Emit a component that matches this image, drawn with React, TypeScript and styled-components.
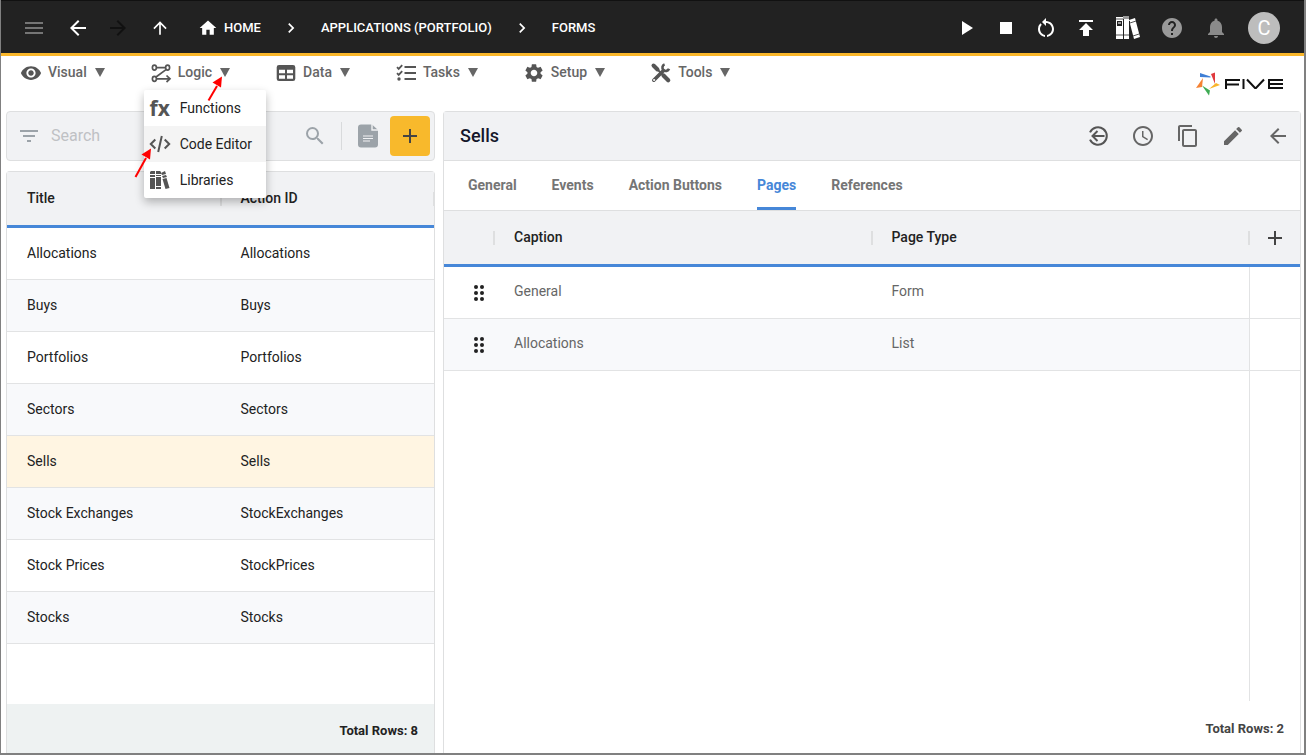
import React from "react";
import styled, { createGlobalStyle, css } from "styled-components";
import {
  MdMenu, MdArrowBack, MdArrowForward, MdArrowUpward, MdHome, MdChevronRight,
  MdPlayArrow, MdStop, MdRestartAlt, MdPublish, MdHelp, MdNotifications,
  MdVisibility, MdSettings, MdFilterList, MdSearch, MdAdd, MdAccessTime,
  MdContentCopy, MdEdit,
} from "react-icons/md";

const GlobalStyle = createGlobalStyle`
  * { box-sizing: border-box; }
  body {
    margin: 0;
    background: #fff;
    color: #222;
    font-family: Roboto, "Liberation Sans", sans-serif;
    font-size: 14px;
    line-height: 20px;
  }
  button, input { font: inherit; color: inherit; }
  button { border: 0; padding: 0; background: none; cursor: pointer; }
  a { color: inherit; text-decoration: none; }
  svg { display: block; flex: none; }
  table { width: 100%; border-collapse: separate; border-spacing: 0; table-layout: fixed; }
`;

const Frame = styled.div`
  display: flex;
  flex-direction: column;
  min-height: 100vh;
  border: solid #808080;
  border-width: 0 2px 2px 1px;
`;

const TopBar = styled.header`
  display: flex;
  align-items: center;
  justify-content: space-between;
  height: 56px;
  padding: 2px 24px 0 21px;
  background: #222;
  border-top: 1px solid #111;
  border-bottom: 3px solid #fab72a;
  color: #fff;
`;

const NavGroup = styled.nav`
  display: flex;
  align-items: center;
`;

const NavButton = styled.button<{ $gap: number; $tone?: string }>`
  display: flex;
  margin-right: ${(p) => p.$gap}px;
  color: ${(p) => p.$tone || "#fff"};
`;

const Crumb = styled.a`
  display: flex;
  align-items: center;
  gap: 6px;
  font-size: 13px;
  font-weight: 500;
`;

const CrumbSeparator = styled.span`
  display: flex;
  margin: 0 20px;
`;

const Actions = styled.div`
  display: flex;
  align-items: center;
  gap: 16px;
`;

const ActionButton = styled.button<{ $tone?: string }>`
  display: flex;
  align-items: center;
  justify-content: center;
  width: 24px;
  height: 28px;
  color: ${(p) => p.$tone || "#fff"};
`;

const WideAction = styled(ActionButton)`
  width: 28px;
`;

const Avatar = styled.button`
  width: 32px;
  height: 32px;
  margin-left: 2px;
  border-radius: 50%;
  background: #bdbdbd;
  color: #fff;
  font-size: 20px;
`;

const MenuBar = styled.div`
  display: flex;
  justify-content: space-between;
  height: 55px;
  padding: 3px 20px 0 19px;
`;

const Menus = styled.nav`
  display: flex;
  align-items: flex-start;
  gap: 45px;
`;

const MenuHolder = styled.div`
  position: relative;
`;

const MenuButton = styled.button`
  display: flex;
  align-items: center;
  gap: 6px;
  height: 26px;
  color: #666;
  font-weight: 500;
  svg {
    margin-top: 2px;
    color: #555;
  }
`;

const Caret = styled.span`
  margin-left: 2px;
  border: solid transparent;
  border-width: 9px 5px 0;
  border-top-color: #666;
`;

const Dropdown = styled.div`
  position: absolute;
  z-index: 2;
  top: 31px;
  left: -6px;
  width: 122px;
  background: #fff;
  border-radius: 2px;
  box-shadow: 0 4px 10px rgba(0, 0, 0, 0.28);
`;

const DropdownItem = styled.button<{ $active?: boolean }>`
  display: flex;
  align-items: center;
  gap: 8px;
  width: 100%;
  height: 36px;
  padding-left: 4px;
  background: ${(p) => (p.$active ? "#f4f4f4" : "transparent")};
  svg { color: #555; }
`;

const FxMark = styled.span`
  width: 24px;
  color: #555;
  font-family: "Open Sans", "Noto Sans", sans-serif;
  font-size: 21px;
  font-weight: 700;
  line-height: 24px;
`;

const Pointer = styled.svg<{ $x: number; $y: number }>`
  position: absolute;
  z-index: 3;
  left: ${(p) => p.$x}px;
  top: ${(p) => p.$y}px;
  pointer-events: none;
`;

const Logo = styled.a`
  display: flex;
  padding-top: 13px;
`;

const Workspace = styled.main`
  display: grid;
  grid-template-columns: 1fr 2fr;
  gap: 8px;
  flex: 1;
  padding: 0 3px 0 5px;
`;

const ListPane = styled.section`
  display: flex;
  flex-direction: column;
  gap: 10px;
`;

const SearchBar = styled.div`
  display: flex;
  align-items: center;
  height: 50px;
  padding: 0 4px 0 10px;
  background: #f1f2f4;
  border: 1px solid #dedfe0;
  border-radius: 4px;
  color: #9ca3a9;
`;

const SearchInput = styled.input`
  flex: 1;
  min-width: 0;
  margin-left: 10px;
  padding: 0;
  border: 0;
  outline: 0;
  background: transparent;
  font-size: 16px;
  &::placeholder { color: #bfc1c4; opacity: 1; }
`;

const ReportButton = styled.button`
  display: flex;
  align-items: center;
  height: 28px;
  margin: 0 12px 0 14px;
  padding-left: 16px;
  border-left: 1px solid #d8dadc;
`;

const AddButton = styled.button`
  display: flex;
  align-items: center;
  justify-content: center;
  width: 40px;
  height: 40px;
  border-radius: 4px;
  background: #f8b92c;
  color: #444;
`;

const Panel = styled.div`
  display: flex;
  flex-direction: column;
  flex: 1;
  background: #fff;
  border: 1px solid #dedfe0;
  border-bottom: 0;
  border-radius: 4px 4px 0 0;
`;

const HeadCell = styled.th<{ $last?: boolean }>`
  position: relative;
  height: 56px;
  padding: 0 0 2px 20px;
  background: #f1f2f4;
  border-bottom: 3px solid #4687d8;
  text-align: left;
  font-weight: 500;
  ${(p) =>
    !p.$last &&
    css`
      &::after {
        content: "";
        position: absolute;
        z-index: 1;
        right: -1px;
        top: 20px;
        width: 2px;
        height: 14px;
        background: #dedfe0;
      }
    `}
`;

const Cell = styled.td`
  height: 52px;
  padding: 0 0 2px 20px;
  border-bottom: 1px solid #e2e3e4;
`;

const ListRow = styled.tr<{ $selected?: boolean }>`
  cursor: pointer;
  &:nth-child(even) { background: #f8f9fb; }
  ${(p) => p.$selected && css`background: #fff5e2;`}
`;

const ListFooter = styled.footer`
  display: flex;
  align-items: center;
  justify-content: flex-end;
  height: 49px;
  margin-top: auto;
  padding: 4px 16px 0 0;
  background: #eef2f2;
  font-size: 13px;
  font-weight: 700;
`;

const DetailFooter = styled(ListFooter)`
  height: 52px;
  margin-top: 0;
  padding-top: 3px;
  background: #fff;
  color: #444;
`;

const DetailHeader = styled.div`
  display: flex;
  align-items: center;
  justify-content: space-between;
  height: 49px;
  padding: 0 10px 0 16px;
  background: #f1f2f4;
  border-bottom: 1px solid #dedfe0;
`;

const Title = styled.h1`
  margin: 0;
  color: #15172b;
  font-size: 18px;
  font-weight: 500;
`;

const DetailActions = styled.div`
  display: flex;
  gap: 21px;
`;

const DetailButton = styled.button`
  display: flex;
  color: #666;
`;

const Tabs = styled.div`
  display: flex;
  gap: 35px;
  height: 50px;
  padding: 0 24px;
  border-bottom: 1px solid #dedfe0;
`;

const Tab = styled.button<{ $active?: boolean }>`
  height: 49px;
  padding-bottom: 2px;
  border: solid transparent;
  border-width: 3px 0;
  border-bottom-color: ${(p) => (p.$active ? "#4687d8" : "transparent")};
  color: ${(p) => (p.$active ? "#4687d8" : "#757575")};
  font-weight: 700;
`;

const DetailCell = styled(Cell)`
  padding-bottom: 3px;
  color: #666;
  tr:nth-child(even) > & { background: #f8f9fb; }
`;

const HandleCell = styled(DetailCell)`
  padding: 0 0 0 30px;
`;

const EdgeCell = styled(DetailCell)`
  border-left: 1px solid #e2e3e4;
  tr:nth-child(even) > & { background: #fff; }
`;

const HeadButtonCell = styled(HeadCell)`
  padding: 0 0 0 14px;
`;

const FixedColumn = styled.col<{ $width: number }>`
  width: ${(p) => p.$width}px;
`;

const Filler = styled.div`
  flex: 1;
  padding-right: 50px;
`;

const FillerLine = styled.div`
  height: 100%;
  border-right: 1px solid #e2e3e4;
`;

const LogicIcon = () => (
  <svg width="22" height="22" viewBox="0 0 22 22" fill="none" stroke="currentColor" strokeWidth="1.7">
    <ellipse cx="4.400" cy="5.600" rx="2" ry="2.500" />
    <ellipse cx="17.600" cy="5.600" rx="2" ry="2.500" />
    <ellipse cx="4.400" cy="16.800" rx="2" ry="2.500" />
    <path d="M6.500 5.600h9M16 7.600 6 15M6.500 16.800H19.500M16.500 13.500l3.500 3.300-3.500 3.200" />
  </svg>
);

const DataIcon = () => (
  <svg width="22" height="22" viewBox="0 0 22 22" fill="currentColor" fillRule="evenodd">
    <path d="M4 3h14a2.300 2.300 0 0 1 2.300 2.300v11.400A2.300 2.300 0 0 1 18 19H4a2.300 2.300 0 0 1-2.300-2.300V5.300A2.300 2.300 0 0 1 4 3zm0 4.800v3.400h6V7.800zm8 0v3.400h6V7.800zM4 13.200v3.600h6v-3.600zm8 0v3.600h6v-3.600z" />
  </svg>
);

const TasksIcon = () => (
  <svg width="22" height="22" viewBox="0 0 22 22" fill="none" stroke="currentColor" strokeWidth="1.800">
    <path d="M9.500 5H21M9.500 11H21M9.500 17H21" strokeWidth="2" />
    <path d="M2 5.200l1.700 1.700L7.200 3.200M2 11.200l1.700 1.700L7.200 9.200" />
    <circle cx="4" cy="17" r="1.700" fill="currentColor" stroke="none" />
  </svg>
);

const ToolsIcon = () => (
  <svg width="22" height="22" viewBox="-1 -1 22 22" fill="none" stroke="currentColor" strokeLinecap="round">
    <path d="M2.500 2.500l4 4" strokeWidth="4" />
    <path d="M6 6l6 6" strokeWidth="1.800" />
    <path d="M12.500 12.500l4.700 4.700" strokeWidth="4.200" />
    <path d="M2.800 17.200l9.500-9.500" strokeWidth="3.600" />
    <path d="M18 5.800a3.400 3.400 0 1 1-4.400-4.400" strokeWidth="2.600" strokeLinecap="butt" />
    <circle cx="3" cy="17" r=".6" stroke="#fff" strokeWidth="1" />
  </svg>
);

const CodeIcon = () => (
  <svg width="24" height="24" viewBox="0 0 24 24" fill="none" stroke="currentColor" strokeWidth="2">
    <path d="M7.300 7.500 2.800 12l4.500 4.500M16.700 7.500l4.500 4.500-4.500 4.500M13.800 4l-3.600 16" />
  </svg>
);

const LibrariesIcon = () => (
  <svg width="24" height="24" viewBox="0 0 24 24" fill="currentColor">
    <path d="M2 4l1-1h4v3H2zM2 7h5v2H2zM2 10h5v11H2zM8 3h4l1 1v2H8zM8 7h5v1H8zM8 9h5v9H8zM8 19h5v2H8zM13 5l4-2 1 3-4 1zM14 8l4-1 1 2-4 1zM14.500 11l4-1 3 10-4 1z" />
  </svg>
);

const BooksIcon = () => (
  <svg width="26" height="26" viewBox="0 0 26 26">
    <path d="M1 2h7v22H1zM9 1h5v23H9zM14 5l6-2 5 19-6 2z" fill="#fff" />
    <path d="M2 6h5v5H2z" fill="#222" />
    <path d="M3 7h3v2H3zM8 1h6v3H8z" fill="#999" />
    <path d="M1 20h7M9 20h5M15 8l6-2M18 21l6-2M1 4h7" stroke="#555" fill="none" />
    <path d="M8.500 4v20M14.500 6v18" stroke="#222" />
  </svg>
);

const ReportIcon = () => (
  <svg width="20" height="24" viewBox="0 0 20 24">
    <path d="M3 .5h11L20 6v14.500a3 3 0 0 1-3 3H3a3 3 0 0 1-3-3v-17a3 3 0 0 1 3-3z" fill="currentColor" />
    <path d="M14 0v6h6" fill="none" stroke="#f1f2f4" strokeWidth="1.400" />
    <path d="M5 12h10M5 14.500h10M5 17h7" stroke="#f1f2f4" strokeWidth="1.200" />
  </svg>
);

const RevertIcon = () => (
  <svg width="24" height="24" viewBox="0 0 24 24" fill="none" stroke="#555" strokeWidth="2">
    <path d="M4 8.300A8.800 8.800 0 1 1 4 15.700" />
    <path d="M18.500 12H6.500M11.500 7l-5 5 5 5" />
  </svg>
);

const DragIcon = () => (
  <svg width="10" height="16" viewBox="0 0 10 16" fill="#222">
    {[2, 8, 14].map((y) => (
      <React.Fragment key={y}>
        <circle cx="2" cy={y} r="2" />
        <circle cx="8" cy={y} r="2" />
      </React.Fragment>
    ))}
  </svg>
);

const FiveLogo = () => (
  <svg width="88" height="24" viewBox="0 0 88 24" role="img" aria-label="FIVE">
    <path d="M4 1l10.500 3.500V5.500L4 5z" fill="#3f7fd5" />
    <path d="M19 .5V12l-4-10z" fill="#e03a3e" />
    <path d="M24 13l-11 4 7-6z" fill="#f9b52b" />
    <path d="M13 23.500l-7-10 8 5z" fill="#3eab54" />
    <path d="M0 16L7 6l-1 9z" fill="#f58233" />
    <g fill="none" stroke="#111" strokeWidth="2">
      <path d="M30 17V8h14M31 12.500h12M47.500 7v10M51 7.500l8 8.500h1l8-8.500M87 8H73v8h14M73 12h14" />
    </g>
  </svg>
);

const ArrowMark = ({ x, y, tail }: { x: number; y: number; tail: string }) => (
  <Pointer $x={x} $y={y} width="18" height="30" viewBox="0 0 18 30">
    <path d={`M${tail}L12 10`} stroke="#f00" strokeWidth="2" />
    <path d="M17 0.500L16 11.500 7.500 6.500z" fill="#f00" />
  </Pointer>
);

const menus = [
  { label: "Visual", icon: <MdVisibility size={22} /> },
  { label: "Logic", icon: <LogicIcon /> },
  { label: "Data", icon: <DataIcon /> },
  { label: "Tasks", icon: <TasksIcon /> },
  { label: "Setup", icon: <MdSettings size={22} /> },
  { label: "Tools", icon: <ToolsIcon /> },
];

const forms = [
  ["Allocations", "Allocations"],
  ["Buys", "Buys"],
  ["Portfolios", "Portfolios"],
  ["Sectors", "Sectors"],
  ["Sells", "Sells"],
  ["Stock Exchanges", "StockExchanges"],
  ["Stock Prices", "StockPrices"],
  ["Stocks", "Stocks"],
];

const pages = [
  ["General", "Form"],
  ["Allocations", "List"],
];

const tabs = ["General", "Events", "Action Buttons", "Pages", "References"];

export default function App() {
  return (
    <>
      <GlobalStyle />
      <Frame>
        <TopBar>
          <NavGroup aria-label="Breadcrumb">
            <NavButton $gap={20} $tone="#757575" aria-label="Menu"><MdMenu size={24} /></NavButton>
            <NavButton $gap={16} aria-label="Back"><MdArrowBack size={24} /></NavButton>
            <NavButton $gap={20} $tone="#111" aria-label="Forward"><MdArrowForward size={24} /></NavButton>
            <NavButton $gap={28} aria-label="Up"><MdArrowUpward size={20} /></NavButton>
            <Crumb href="#home"><MdHome size={20} />HOME</Crumb>
            <CrumbSeparator><MdChevronRight size={20} /></CrumbSeparator>
            <Crumb href="#applications">APPLICATIONS (PORTFOLIO)</Crumb>
            <CrumbSeparator><MdChevronRight size={20} /></CrumbSeparator>
            <Crumb href="#forms">FORMS</Crumb>
          </NavGroup>
          <Actions>
            <ActionButton aria-label="Run"><MdPlayArrow size={24} /></ActionButton>
            <ActionButton aria-label="Stop"><MdStop size={24} /></ActionButton>
            <ActionButton aria-label="Restart"><MdRestartAlt size={24} /></ActionButton>
            <ActionButton aria-label="Deploy"><MdPublish size={24} /></ActionButton>
            <WideAction aria-label="Documentation"><BooksIcon /></WideAction>
            <WideAction $tone="#999" aria-label="Help"><MdHelp size={24} /></WideAction>
            <WideAction $tone="#8a8a8a" aria-label="Notifications"><MdNotifications size={24} /></WideAction>
            <Avatar>C</Avatar>
          </Actions>
        </TopBar>

        <MenuBar>
          <Menus aria-label="Main">
            {menus.map((menu) => (
              <MenuHolder key={menu.label}>
                <MenuButton>
                  {menu.icon}
                  {menu.label}
                  <Caret />
                </MenuButton>
                {menu.label === "Logic" && (
                  <>
                    <Dropdown>
                      <DropdownItem><FxMark aria-hidden="true">fx</FxMark>Functions</DropdownItem>
                      <DropdownItem $active><CodeIcon />Code Editor</DropdownItem>
                      <DropdownItem><LibrariesIcon />Libraries</DropdownItem>
                    </Dropdown>
                    <ArrowMark x={55} y={17} tail="3.500 24.500" />
                    <ArrowMark x={-16} y={89} tail="1.500 29" />
                  </>
                )}
              </MenuHolder>
            ))}
          </Menus>
          <Logo href="#five"><FiveLogo /></Logo>
        </MenuBar>

        <Workspace>
          <ListPane>
            <SearchBar>
              <MdFilterList size={24} />
              <SearchInput type="search" placeholder="Search" aria-label="Search" />
              <MdSearch size={24} />
              <ReportButton aria-label="Report"><ReportIcon /></ReportButton>
              <AddButton aria-label="Add form"><MdAdd size={24} /></AddButton>
            </SearchBar>
            <Panel>
              <table>
                <thead>
                  <tr>
                    <HeadCell>Title</HeadCell>
                    <HeadCell>Action ID</HeadCell>
                  </tr>
                </thead>
                <tbody>
                  {forms.map(([title, id]) => (
                    <ListRow key={id} $selected={title === "Sells"}>
                      <Cell>{title}</Cell>
                      <Cell>{id}</Cell>
                    </ListRow>
                  ))}
                </tbody>
              </table>
              <ListFooter>Total Rows: 8</ListFooter>
            </Panel>
          </ListPane>

          <Panel>
            <DetailHeader>
              <Title>Sells</Title>
              <DetailActions>
                <DetailButton aria-label="Revert"><RevertIcon /></DetailButton>
                <DetailButton aria-label="History"><MdAccessTime size={24} /></DetailButton>
                <DetailButton aria-label="Copy"><MdContentCopy size={24} /></DetailButton>
                <DetailButton aria-label="Edit"><MdEdit size={24} /></DetailButton>
                <DetailButton aria-label="Back"><MdArrowBack size={24} /></DetailButton>
              </DetailActions>
            </DetailHeader>
            <Tabs role="tablist">
              {tabs.map((tab) => (
                <Tab key={tab} role="tab" aria-selected={tab === "Pages"} $active={tab === "Pages"}>{tab}</Tab>
              ))}
            </Tabs>
            <table>
              <colgroup>
                <FixedColumn $width={50} />
                <col />
                <col />
                <FixedColumn $width={51} />
              </colgroup>
              <thead>
                <tr>
                  <HeadCell aria-label="Reorder" />
                  <HeadCell>Caption</HeadCell>
                  <HeadCell>Page Type</HeadCell>
                  <HeadButtonCell $last>
                    <DetailButton aria-label="Add page"><MdAdd size={24} color="#444" /></DetailButton>
                  </HeadButtonCell>
                </tr>
              </thead>
              <tbody>
                {pages.map(([caption, type]) => (
                  <tr key={caption}>
                    <HandleCell><DragIcon /></HandleCell>
                    <DetailCell>{caption}</DetailCell>
                    <DetailCell>{type}</DetailCell>
                    <EdgeCell />
                  </tr>
                ))}
              </tbody>
            </table>
            <Filler><FillerLine /></Filler>
            <DetailFooter>Total Rows: 2</DetailFooter>
          </Panel>
        </Workspace>
      </Frame>
    </>
  );
}
